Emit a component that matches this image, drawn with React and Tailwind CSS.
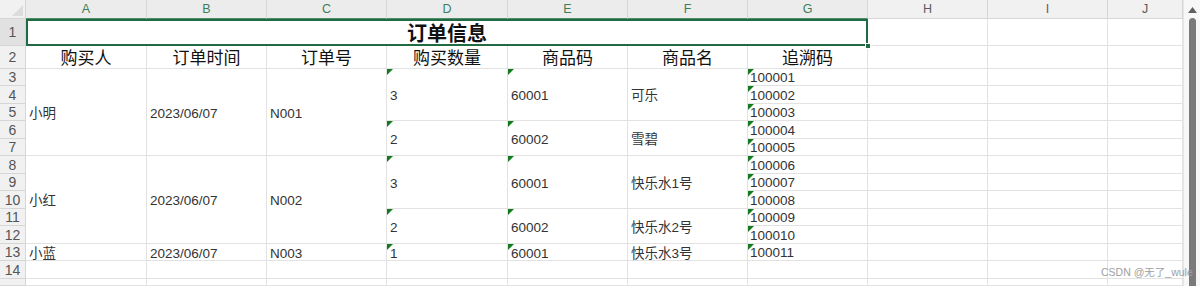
import React from "react";

const FONT = "font-['Liberation_Sans','Noto_Sans_CJK_SC',sans-serif]";

function Tri() {
  return (
    <svg className="absolute left-0 top-0" width="6" height="6" viewBox="0 0 6 6">
      <polygon points="0,0 6,0 0,6" fill="#137a1f" />
    </svg>
  );
}

function Cell({ span = "", text = "", tri = false, align = "items-center pt-[3px] leading-[16px]", pad = "pl-[3px]" }) {
  return (
    <div
      className={`relative flex ${align} ${pad} ${span} border-r border-b border-[#e2e2e2] bg-white text-[13.5px] text-[#333333] whitespace-nowrap`}
    >
      {tri && <Tri />}
      <span>{text}</span>
    </div>
  );
}

function Empty({ span = "" }) {
  return <div className={`${span} border-r border-b border-[#e2e2e2] bg-white`} />;
}

function RowHead({ n, selected = false }) {
  return (
    <div
      className={`flex items-center justify-center overflow-hidden border-r border-b border-[#d6d6d6] text-[14px] leading-none text-[#555555] ${
        selected ? "bg-[#e1e1e1]" : "bg-[#f1f1f1]"
      }`}
    >
      {n}
    </div>
  );
}

function HJ() {
  return (
    <>
      <Empty />
      <Empty />
      <Empty />
    </>
  );
}

export default function App() {
  const cols = ["A", "B", "C", "D", "E", "F", "G", "H", "I", "J"];
  const g = {
    3: "100001",
    4: "100002",
    5: "100003",
    6: "100004",
    7: "100005",
    8: "100006",
    9: "100007",
    10: "100008",
    11: "100009",
    12: "100010",
    13: "100011",
  };

  const G = ({ r }) => (
    <Cell text={g[r]} tri align="items-end pb-[1px] leading-[12px]" pad="pl-[2px]" />
  );

  return (
    <div className={`relative flex h-[286px] w-[1200px] overflow-hidden bg-white ${FONT}`}>
      <div className="relative grid h-[286px] w-[1183px] grid-cols-[26px_121px_120px_120px_121px_120px_120px_120px_120px_120px_75px] grid-rows-[19px_27px_23px_17px_18px_17px_18px_17px_18px_17px_18px_17px_18px_17px_18px_7px]">
        {/* column headers */}
        <div className="relative border-r border-b border-[#d6d6d6] bg-[#f1f1f1]">
          <svg className="absolute bottom-[2px] right-[2px]" width="11" height="11" viewBox="0 0 11 11">
            <polygon points="11,0 11,11 0,11" fill="#dcdcdc" />
          </svg>
        </div>
        {cols.map((c, i) => (
          <div
            key={c}
            className={`flex items-center justify-center border-r border-b text-[12.5px] leading-none ${
              i < 7
                ? "border-r-[#d6d6d6] border-b-[#4f8d6a] bg-[#ececec] text-[#3d7f5b]"
                : "border-[#d6d6d6] bg-[#f1f1f1] text-[#5c5c5c]"
            }`}
          >
            {c}
          </div>
        ))}

        {/* row 1 */}
        <RowHead n={1} selected />
        <div className="relative col-span-7 flex items-center justify-center bg-white text-[20px] font-bold leading-none text-[#111111]">
          <span className="font-['Noto_Sans_CJK_SC',sans-serif]">订单信息</span>
          <div className="pointer-events-none absolute inset-0 border-2 border-[#1f6b43]" />
          <div className="absolute -bottom-[3px] -right-[3px] h-[6px] w-[6px] border border-white bg-[#1f6b43]" />
        </div>
        <HJ />

        {/* row 2 */}
        <RowHead n={2} />
        {["购买人", "订单时间", "订单号", "购买数量", "商品码", "商品名", "追溯码"].map((h) => (
          <div
            key={h}
            className="flex items-center justify-center border-r border-b border-[#e2e2e2] bg-white pt-[2px] text-[17px] leading-none text-[#111111]"
          >
            {h}
          </div>
        ))}
        <HJ />

        {/* row 3 */}
        <RowHead n={3} />
        <Cell span="row-span-5" text="小明" />
        <Cell span="row-span-5" text="2023/06/07" />
        <Cell span="row-span-5" text="N001" />
        <Cell span="row-span-3" text="3" tri />
        <Cell span="row-span-3" text="60001" tri />
        <Cell span="row-span-3" text="可乐" />
        <G r={3} />
        <HJ />

        <RowHead n={4} />
        <G r={4} />
        <HJ />

        <RowHead n={5} />
        <G r={5} />
        <HJ />

        <RowHead n={6} />
        <Cell span="row-span-2" text="2" tri />
        <Cell span="row-span-2" text="60002" tri />
        <Cell span="row-span-2" text="雪碧" />
        <G r={6} />
        <HJ />

        <RowHead n={7} />
        <G r={7} />
        <HJ />

        {/* row 8 */}
        <RowHead n={8} />
        <Cell span="row-span-5" text="小红" />
        <Cell span="row-span-5" text="2023/06/07" />
        <Cell span="row-span-5" text="N002" />
        <Cell span="row-span-3" text="3" tri />
        <Cell span="row-span-3" text="60001" tri />
        <Cell span="row-span-3" text="快乐水1号" />
        <G r={8} />
        <HJ />

        <RowHead n={9} />
        <G r={9} />
        <HJ />

        <RowHead n={10} />
        <G r={10} />
        <HJ />

        <RowHead n={11} />
        <Cell span="row-span-2" text="2" tri />
        <Cell span="row-span-2" text="60002" tri />
        <Cell span="row-span-2" text="快乐水2号" />
        <G r={11} />
        <HJ />

        <RowHead n={12} />
        <G r={12} />
        <HJ />

        {/* row 13 */}
        <RowHead n={13} />
        <Cell text="小蓝" />
        <Cell text="2023/06/07" />
        <Cell text="N003" />
        <Cell text="1" tri />
        <Cell text="60001" tri />
        <Cell text="快乐水3号" />
        <G r={13} />
        <HJ />

        {/* row 14 */}
        <RowHead n={14} />
        {[0, 1, 2, 3, 4, 5, 6, 7, 8, 9].map((k) => (
          <Empty key={"r14" + k} />
        ))}

        {/* row 15 (partly visible) */}
        <RowHead n="" />
        {[0, 1, 2, 3, 4, 5, 6, 7, 8, 9].map((k) => (
          <Empty key={"r15" + k} />
        ))}
      </div>

      {/* scrollbar */}
      <div className="relative flex h-[286px] w-[17px] flex-col items-center border-l border-[#e6e6e6] bg-[#f7f7f7]">
        <svg className="mt-[7px]" width="9" height="6" viewBox="0 0 9 6">
          <polygon points="4.5,0 9,6 0,6" fill="#606060" />
        </svg>
        <div className="mt-[5px] w-[7px] flex-1 rounded-t-full bg-[#7a7a7a]" />
      </div>

      {/* watermark */}
      <div className="pointer-events-none absolute left-[1101px] top-[267px] z-10 whitespace-nowrap text-[10.5px] leading-none text-[#a0a0a0]">
        CSDN @无了_wule
      </div>
    </div>
  );
}
